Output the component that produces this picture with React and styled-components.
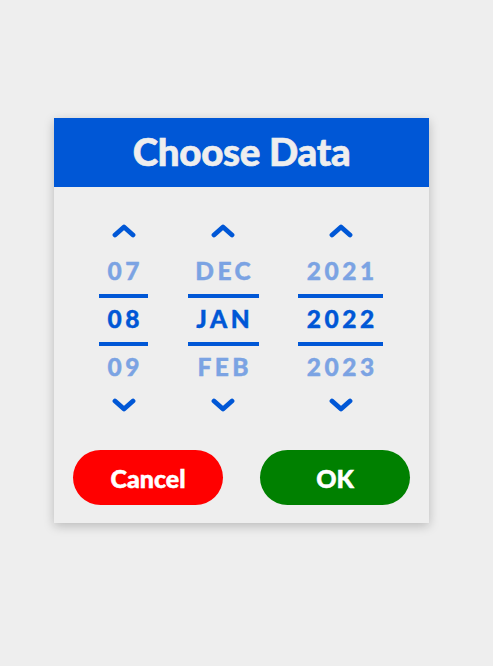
import styled, { createGlobalStyle } from "styled-components";

const GlobalStyle = createGlobalStyle`
  html, body {
    margin: 0;
    padding: 0;
    background: #eeeeee;
    font-family: Lato, "Noto Sans", sans-serif;
  }
`;

const columns = [
  { key: "day", width: 49, items: ["07", "08", "09"] },
  { key: "month", width: 71, items: ["DEC", "JAN", "FEB"] },
  { key: "year", width: 85, items: ["2021", "2022", "2023"] },
];

function Chevron({ up }) {
  return (
    <svg width="24" height="14" viewBox="0 0 24 14">
      <polyline
        points={up ? "3,11 12,3 21,11" : "3,3 12,11 21,3"}
        fill="none"
        stroke="currentColor"
        strokeWidth="4.8"
        strokeLinecap="round"
        strokeLinejoin="round"
      />
    </svg>
  );
}

export default function App() {
  return (
    <>
      <GlobalStyle />
      <Page>
        <Card>
          <Header>Choose Data</Header>
          <Body>
            <Pickers>
              {columns.map((col) => (
                <Column key={col.key} $width={col.width}>
                  <Arrow $up>
                    <Chevron up />
                  </Arrow>
                  <Item>{col.items[0]}</Item>
                  <Item $selected>{col.items[1]}</Item>
                  <Item>{col.items[2]}</Item>
                  <Arrow>
                    <Chevron />
                  </Arrow>
                </Column>
              ))}
            </Pickers>
            <Actions>
              <ActionButton $color="#ff0000">Cancel</ActionButton>
              <ActionButton $color="#008000">OK</ActionButton>
            </Actions>
          </Body>
        </Card>
      </Page>
    </>
  );
}

const Page = styled.div`
  width: 493px;
  height: 666px;
  padding-top: 118px;
  padding-left: 54px;
  box-sizing: border-box;
`;

const Card = styled.div`
  width: 375px;
  background: #eeeeee;
  box-shadow: 0 3px 10px rgba(0, 0, 0, 0.22);
`;

const Header = styled.div`
  height: 66px;
  padding-bottom: 3px;
  background: #0057d6;
  color: #eeeeee;
  font-size: 38.5px;
  font-weight: 900;
  -webkit-text-stroke: 0.6px #eeeeee;
  display: flex;
  align-items: center;
  justify-content: center;
  letter-spacing: -0.3px;
`;

const Body = styled.div`
  padding: 37px 19px 18px;
`;

const Pickers = styled.div`
  display: flex;
  gap: 39.5px;
  padding-left: 26px;
`;

const Column = styled.div`
  width: ${(p) => p.$width}px;
  display: flex;
  flex-direction: column;
  align-items: center;
`;

const Arrow = styled.button`
  border: none;
  background: none;
  padding: 0;
  height: 14px;
  display: flex;
  align-items: center;
  justify-content: center;
  color: #0057d6;
  cursor: pointer;
  margin: ${(p) => (p.$up ? "0 0 12px" : "8px 0 0")};
`;

const Item = styled.div`
  width: 100%;
  height: 41px;
  padding-bottom: 3px;
  display: flex;
  align-items: center;
  justify-content: center;
  font-size: 24.5px;
  font-weight: 900;
  letter-spacing: 3.5px;
  text-indent: 3.5px;
  color: ${(p) => (p.$selected ? "#0057d6" : "#7ba3e3")};
  -webkit-text-stroke: 0.4px currentColor;
  border-top: ${(p) => (p.$selected ? "4px solid #0057d6" : "none")};
  border-bottom: ${(p) => (p.$selected ? "4px solid #0057d6" : "none")};
`;

const Actions = styled.div`
  display: flex;
  justify-content: space-between;
  margin-top: 38px;
`;

const ActionButton = styled.button`
  width: 150px;
  height: 55px;
  border: none;
  border-radius: 28px;
  background: ${(p) => p.$color};
  color: #ffffff;
  font-family: Lato, "Noto Sans", sans-serif;
  font-size: 25px;
  font-weight: 900;
  -webkit-text-stroke: 0.5px #ffffff;
  cursor: pointer;
`;
